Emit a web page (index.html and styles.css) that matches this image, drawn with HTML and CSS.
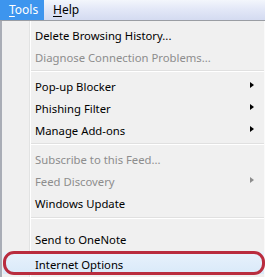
FILE: index.html
```html
<!DOCTYPE html>
<html lang="en">
<head>
    <meta charset="UTF-8">
    <title>Tools menu</title>
    <link rel="stylesheet" href="styles.css">
</head>
<body>
    <div class="menubar">
        <span class="top-item active"><u>T</u>ools</span>
        <span class="top-item"><u>H</u>elp</span>
    </div>

    <div class="menu">
        <div class="item">Delete Browsing History...</div>
        <div class="item disabled">Diagnose Connection Problems...</div>
        <div class="sep"></div>
        <div class="item sub">Pop-up Blocker</div>
        <div class="item sub">Phishing Filter</div>
        <div class="item sub">Manage Add-ons</div>
        <div class="sep"></div>
        <div class="item disabled">Subscribe to this Feed...</div>
        <div class="item disabled sub">Feed Discovery</div>
        <div class="item">Windows Update</div>
        <div class="sep sep-tall"></div>
        <div class="item">Send to OneNote</div>
        <div class="sep sep-short"></div>
        <div class="item highlight">Internet Options</div>
    </div>
</body>
</html>
```

FILE: styles.css
```css
body {
    margin: 0;
    width: 265px;
    height: 277px;
    overflow: hidden;
    font-family: 'Noto Sans', 'Open Sans', sans-serif;
    font-size: 11.3px;
    background: #f0f0f0;
}
.menubar {
    height: 20px;
    display: flex;
    background: linear-gradient(#f3f6fc 0%, #e3e8f7 45%, #d4dbf1 100%);
    border-bottom: 1px solid #9a9da3;
}
.top-item {
    font-size: 12px;
    line-height: 20px;
    padding: 0 8px 0 9px;
    color: #000;
}
.top-item u {
    text-decoration-thickness: 1px;
    text-underline-offset: 2px;
}
.top-item.active {
    background: #3d95ee;
    color: #fff;
    width: 27px;
}
.menu {
    position: relative;
    height: 256px;
    padding-top: 2px;
    border-left: 2px solid #a9adb6;
    border-right: 1px solid #fafafa;
    background: linear-gradient(90deg, #f0f0f0 0, #f0f0f0 27px, #e2e3e3 27px, #e2e3e3 28px, #ffffff 28px, #ffffff 29px, #f0f0f0 29px);
}
.item {
    position: relative;
    height: 22px;
    line-height: 25px;
    padding-left: 33px;
    color: #000;
}
.item.disabled {
    color: #8d8d8d;
}
.item.sub::before {
    content: "";
    position: absolute;
    right: 10px;
    top: 8px;
    border-left: 4px solid #000;
    border-top: 3.5px solid transparent;
    border-bottom: 3.5px solid transparent;
}
.item.disabled.sub::before {
    border-left-color: #8d8d8d;
}
.sep {
    height: 7px;
    margin-left: 29px;
    background: linear-gradient(#f0f0f0 3px, #e0e0e0 3px, #e0e0e0 4px, #ffffff 4px, #ffffff 5px, #f0f0f0 5px);
}
.sep-tall {
    height: 14px;
    background: linear-gradient(#f0f0f0 4px, #e0e0e0 4px, #e0e0e0 5px, #ffffff 5px, #ffffff 6px, #f0f0f0 6px);
}
.sep-short {
    height: 3px;
    background: none;
}
.item.highlight {
    margin-left: 1px;
    padding-left: 32px;
    background: linear-gradient(#e8f2fc, #d9e9f9);
}
.item.highlight::after {
    content: "";
    position: absolute;
    left: 0;
    right: -1px;
    top: -1px;
    bottom: -1px;
    border: 3px solid #b92c3e;
    border-radius: 11px;
}
```
